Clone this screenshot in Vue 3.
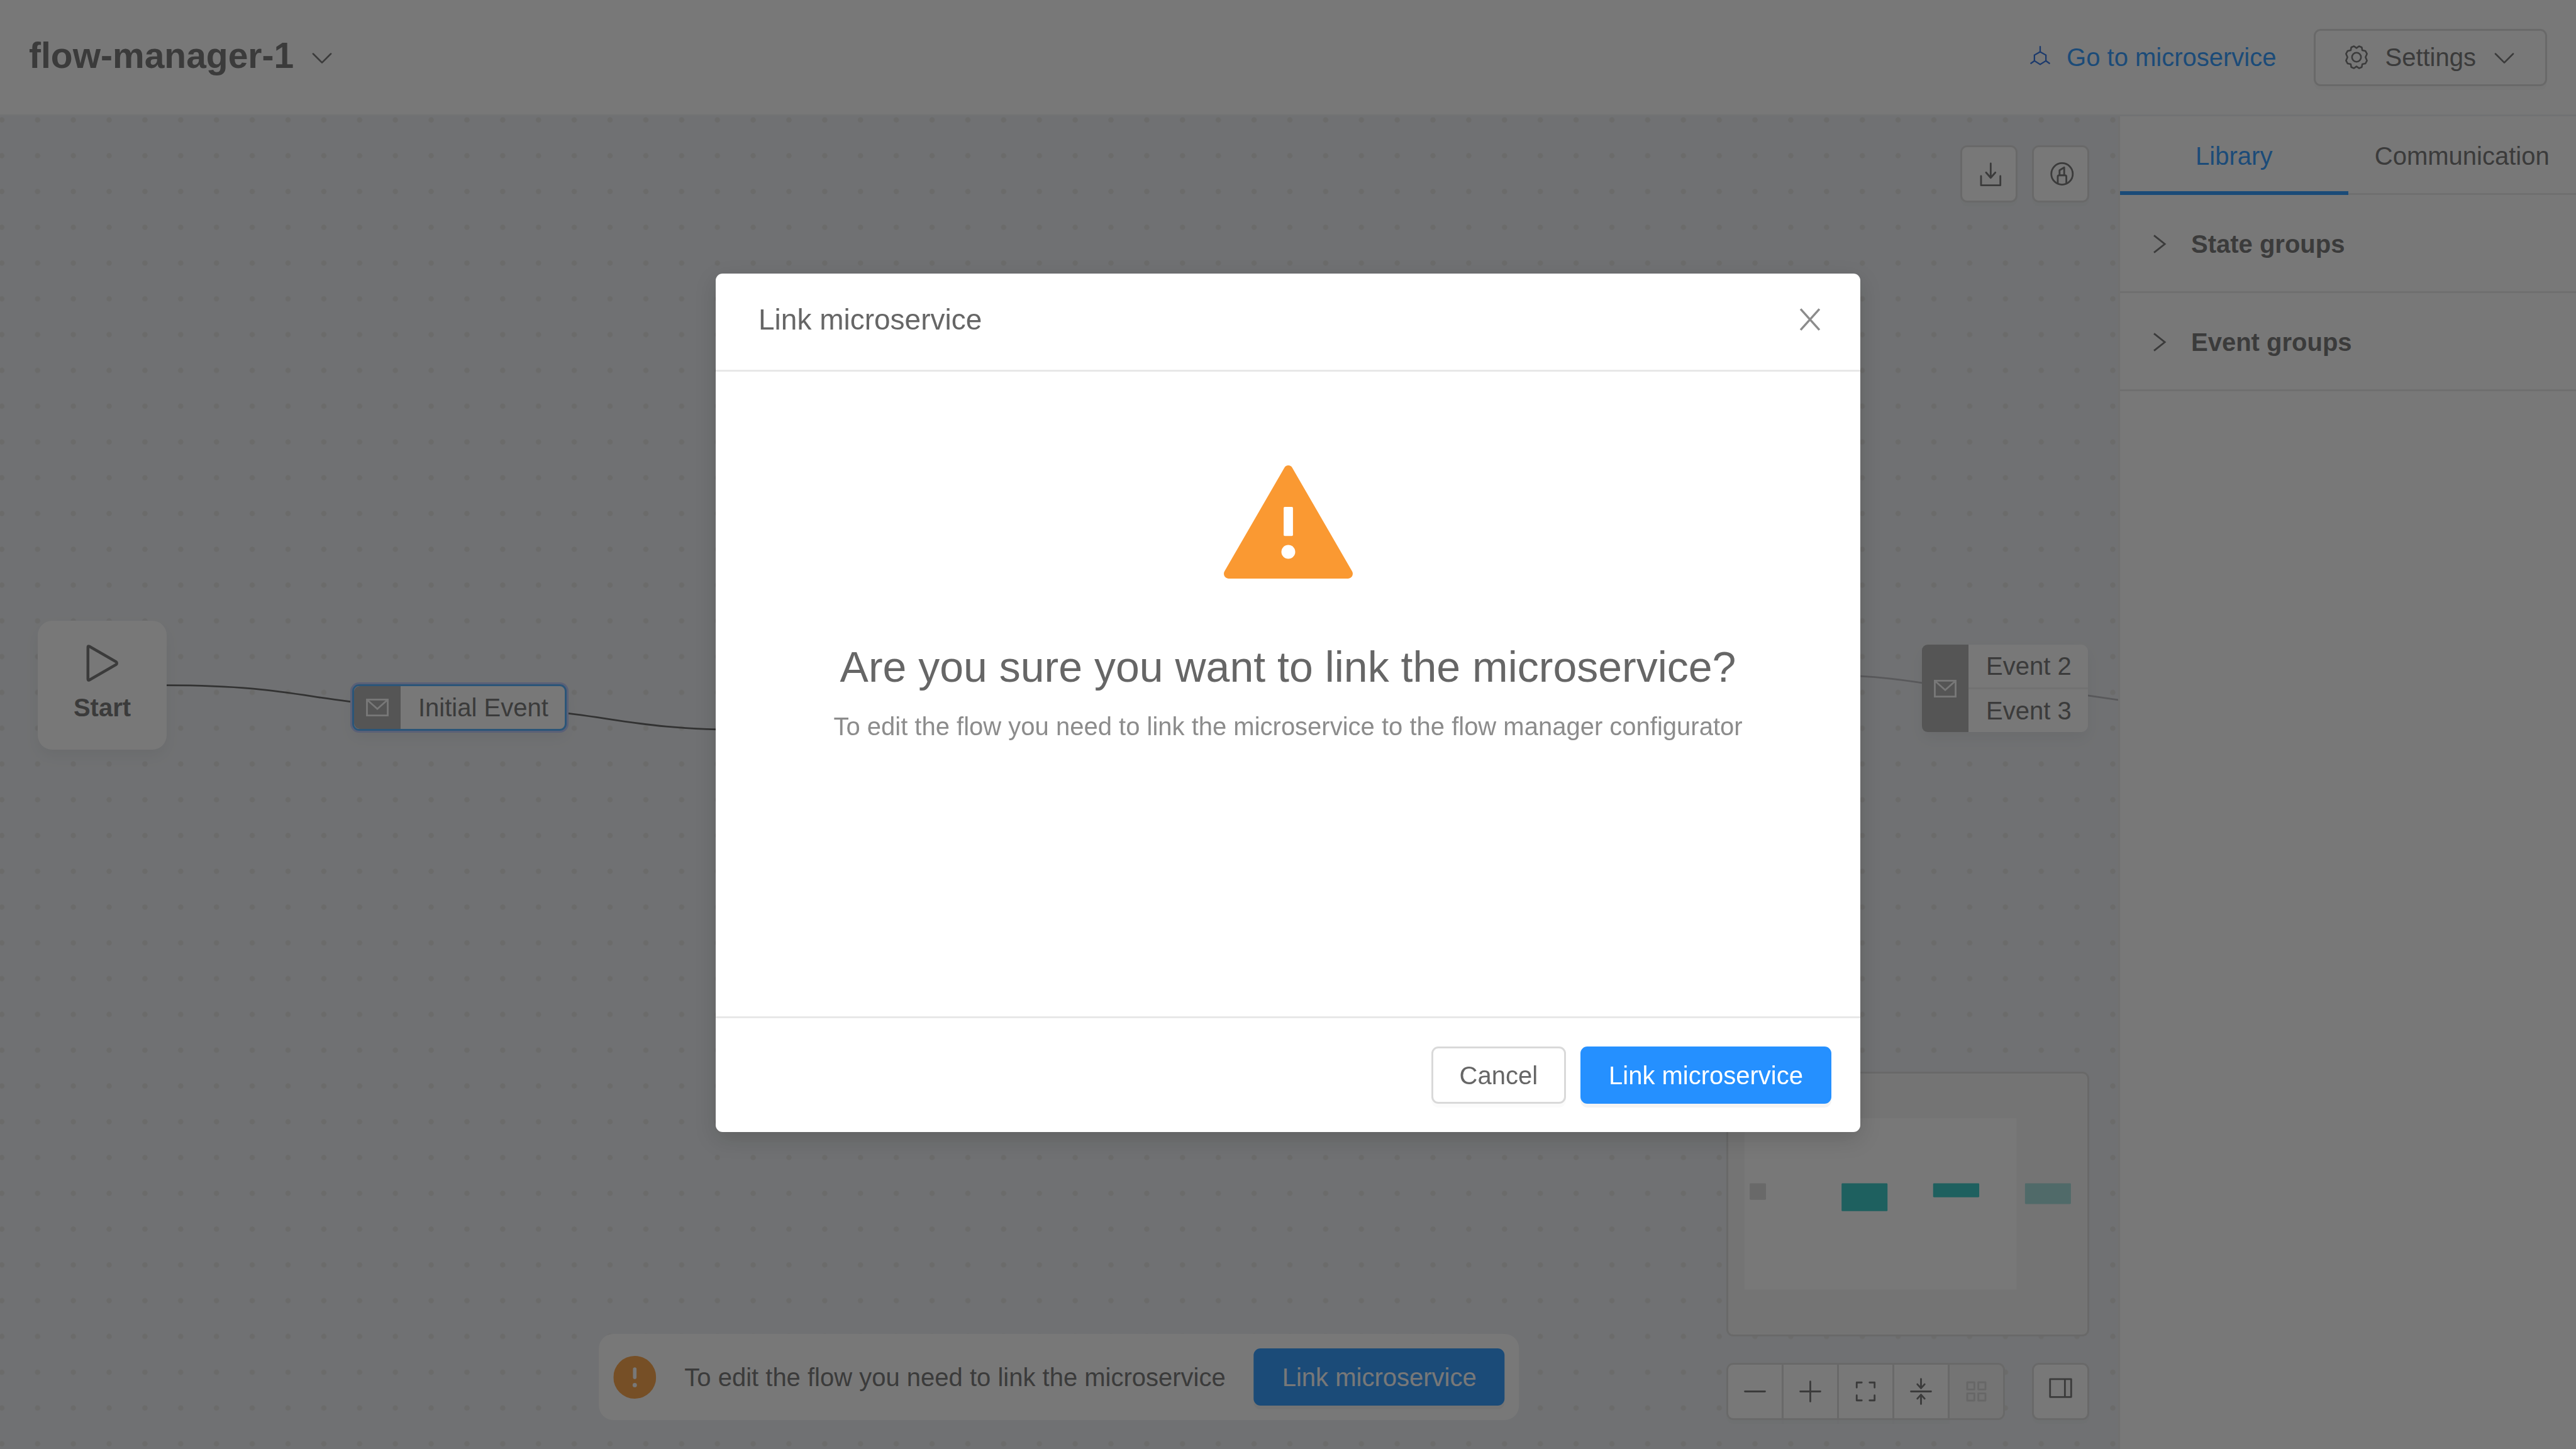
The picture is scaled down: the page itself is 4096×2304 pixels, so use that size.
<script setup>
import { ref } from 'vue'

const title = ref('flow-manager-1')
const activeTab = ref('library')
const tabs = [
  { id: 'library', label: 'Library' },
  { id: 'communication', label: 'Communication' },
]
const groups = ['State groups', 'Event groups']
const events = ['Event 2', 'Event 3']
const modalOpen = ref(true)

const miniNodes = [
  { x: 12, w: 9.1, h: 9.2, fill: '#d9d9d9' },
  { x: 63.4, w: 25.7, h: 15.6, fill: '#20c2c0' },
  { x: 114.6, w: 25.8, h: 7.8, fill: '#20c2c0' },
  { x: 166, w: 25.7, h: 11.6, fill: '#9bdcd9' },
]
</script>

<template>
  <div class="app">
    <header class="header">
      <div class="header-title">
        <h1>{{ title }}</h1>
        <button class="plain" aria-label="Switch flow manager">
          <svg class="icon-lg" viewBox="0 0 16 16"><path class="line" d="M3.1 6.1 8 11l4.9-4.9" /></svg>
        </button>
      </div>
      <div class="header-actions">
        <a class="service-link" href="#microservice">
          <svg class="icon" viewBox="0 0 70 70">
            <path class="service-glyph" d="M35 4v16M35 20l16 9v16l-16 10-16-10V29zM19 45 8 53M51 45l11 8" />
          </svg>
          Go to microservice
        </a>
        <button class="btn btn-settings">
          <svg class="icon-lg" viewBox="0 0 16 16">
            <path class="line" d="M6.6 1.9 8 2.9l1.4-1 1.5.6.3 1.7 1.7.3.9 1.6-.8 1.9.8 1.9-.9 1.6-1.7.3-.3 1.7-1.5.6-1.4-1-1.4 1-1.5-.6-.3-1.7-1.7-.3-.9-1.6.8-1.9-.8-1.9.9-1.6 1.7-.3.3-1.7z" />
            <circle class="line" cx="8" cy="8" r="2.5" />
          </svg>
          Settings
          <svg class="icon-lg" viewBox="0 0 16 16"><path class="line" d="M3.1 6.1 8 11l4.9-4.9" /></svg>
        </button>
      </div>
    </header>

    <div class="workspace">
      <main class="canvas">
        <svg class="canvas-bg" viewBox="0 0 1184 745" preserveAspectRatio="xMinYMin slice">
          <defs>
            <pattern id="grid-dots" x="-9" y="-8" width="20" height="20" patternUnits="userSpaceOnUse">
              <circle cx="10" cy="10" r="1.5" fill="#dededd" />
            </pattern>
          </defs>
          <rect width="1184" height="745" fill="url(#grid-dots)" />
          <path class="edge active" d="M93 318C175 318 175 330.5 257 330.5S339 343 421 343" />
          <path class="edge" d="M1040 312.9C1052 313.6 1064 315 1075 316.8M1167 323.7L1184 326.2" />
        </svg>

        <div class="node start-node">
          <svg class="play" viewBox="0 0 90 104">
            <path d="M5 7v90q0 4 4 2l75-43q4-4 0-8L9 5Q5 3 5 7z" />
          </svg>
          <strong>Start</strong>
        </div>

        <div class="node event-node selected">
          <span class="event-icon">
            <svg class="mail" viewBox="0 0 64 50"><path d="M2.5 2.5h59v45h-59zM4 4l28 25L60 4" /></svg>
          </span>
          <span class="event-label">Initial Event</span>
        </div>

        <div class="node event-node multi">
          <span class="event-icon">
            <svg class="mail" viewBox="0 0 64 50"><path d="M2.5 2.5h59v45h-59zM4 4l28 25L60 4" /></svg>
          </span>
          <ul class="event-list">
            <li v-for="e in events" :key="e" class="event-label">{{ e }}</li>
          </ul>
        </div>

        <div class="top-tools">
          <button class="btn btn-square" aria-label="Download">
            <svg viewBox="0 0 160 160">
              <path class="stroke5" d="M85 51v38M72 76l13 15 13-15M58 86v26h54V86" />
            </svg>
          </button>
          <button class="btn btn-square" aria-label="Highlight">
            <svg viewBox="0 0 160 160">
              <circle class="stroke5" cx="84" cy="80" r="30" />
              <path class="stroke5" d="M72 106V88q0-4 4-4h16q4 0 4 4v18M77 84V70l13-8v22" />
            </svg>
          </button>
        </div>

        <div class="banner">
          <svg class="banner-icon" viewBox="0 0 120 120">
            <circle cx="60" cy="60" r="60" fill="#fa9932" />
            <rect x="55" y="32" width="10" height="33" rx="5" fill="#fff" />
            <circle cx="60" cy="82" r="6" fill="#fff" />
          </svg>
          <span>To edit the flow you need to link the microservice</span>
          <button class="btn btn-primary">Link microservice</button>
        </div>

        <div class="bottom-tools">
          <div class="minimap">
            <svg viewBox="0 0 201 146">
              <rect x="9.2" y="25.1" width="152.1" height="95.7" fill="#fff" />
              <rect v-for="n in miniNodes" :key="n.x" :x="n.x" y="61.4" :width="n.w" :height="n.h" rx="0.5" :fill="n.fill" />
            </svg>
          </div>
          <div class="controls">
            <div class="btn-group">
              <button class="btn btn-square" aria-label="Zoom out">
                <svg viewBox="0 0 160 160"><path class="stroke5" d="M52 80h56" /></svg>
              </button>
              <button class="btn btn-square" aria-label="Zoom in">
                <svg viewBox="0 0 160 160"><path class="stroke5" d="M52 80h56M80 52v56" /></svg>
              </button>
              <button class="btn btn-square" aria-label="Fit view">
                <svg viewBox="0 0 160 160">
                  <path class="stroke5" d="M69 55H55v14M91 55h14v14M55 91v14h14M105 91v14H91" />
                </svg>
              </button>
              <button class="btn btn-square" aria-label="Collapse">
                <svg viewBox="0 0 160 160">
                  <path class="stroke5" d="M52 80h56M80 45v25M70 60l10 11 10-11M80 115V90M70 100l10-11 10 11" />
                </svg>
              </button>
              <button class="btn btn-square" disabled aria-label="Arrange">
                <svg viewBox="0 0 160 160">
                  <path class="stroke5" d="M54.5 54.5h20v20h-20zM85.5 54.5h20v20h-20zM54.5 85.5h20v20h-20zM85.5 85.5h20v20h-20z" />
                </svg>
              </button>
            </div>
            <button class="btn btn-square" aria-label="Toggle side panel">
              <svg viewBox="0 0 160 160"><path class="stroke5" d="M50.5 45.5h59v50h-59zM92 45.5v50" /></svg>
            </button>
          </div>
        </div>
      </main>

      <aside class="sidebar">
        <div class="tabs" role="tablist">
          <button
            v-for="t in tabs"
            :key="t.id"
            role="tab"
            class="tab"
            :class="{ active: t.id === activeTab }"
            :aria-selected="t.id === activeTab"
            @click="activeTab = t.id"
          >
            {{ t.label }}
          </button>
        </div>
        <button v-for="g in groups" :key="g" class="group">
          <svg class="group-arrow" viewBox="0 0 63 63"><path d="M14 7.5l30 24-30 24" /></svg>
          {{ g }}
        </button>
      </aside>
    </div>

    <div v-if="modalOpen" class="mask">
      <section class="modal" role="dialog" aria-modal="true" aria-labelledby="modal-title">
        <div class="modal-header">
          <h2 id="modal-title">Link microservice</h2>
          <button class="plain" aria-label="Close" @click="modalOpen = false">
            <svg class="icon-lg close" viewBox="0 0 80 80"><path d="M14 11l52 58M66 11L14 69" /></svg>
          </button>
        </div>
        <div class="modal-body">
          <svg class="warning" viewBox="0 0 360 316">
            <path fill="#fa9932" d="M169 6.5a12.7 12.7 0 0 1 22 0L358 295.5a13.5 13.5 0 0 1-11 20.5H13a13.5 13.5 0 0 1-11-20.5z" />
            <rect x="167" y="116" width="26" height="81" rx="3" fill="#fff" />
            <circle cx="180" cy="241.5" r="19.3" fill="#fff" />
          </svg>
          <h3>Are you sure you want to link the microservice?</h3>
          <p>To edit the flow you need to link the microservice to the flow manager configurator</p>
        </div>
        <div class="modal-footer">
          <button class="btn" @click="modalOpen = false">Cancel</button>
          <button class="btn btn-primary">Link microservice</button>
        </div>
      </section>
    </div>
  </div>
</template>

<style>
body {
  margin: 0;
}
</style>

<style scoped>
.app {
  display: flex;
  flex-direction: column;
  min-height: 100vh;
  background: #fff;
  color: #666;
  font-family: "Liberation Sans", Arial, sans-serif;
  font-size: 40px;
  line-height: 62px;
}

.app *,
.app {
  box-sizing: border-box;
}

h1,
h2,
h3,
p,
ul {
  margin: 0;
  padding: 0;
}

button {
  font: inherit;
  color: inherit;
  cursor: pointer;
}

svg {
  display: block;
  flex: none;
}

.plain {
  padding: 0;
  border: 0;
  background: none;
}

.icon {
  width: 40px;
  height: 40px;
}

.icon-lg {
  width: 46px;
  height: 46px;
}

.line {
  fill: none;
  stroke: currentColor;
  stroke-width: 0.9;
  stroke-linecap: round;
  stroke-linejoin: round;
}

.stroke5 {
  fill: none;
  stroke: currentColor;
  stroke-width: 5;
  stroke-linecap: round;
  stroke-linejoin: round;
}

/* Buttons */
.btn {
  display: inline-flex;
  align-items: center;
  justify-content: center;
  height: 91px;
  padding: 0 42px;
  border: 3px solid #d9d9d9;
  border-radius: 11px;
  background: #fff;
  box-shadow: 0 6px 0 rgba(0, 0, 0, 0.016);
  white-space: nowrap;
}

.btn-primary {
  border-color: #2590ff;
  background: #2590ff;
  box-shadow: 0 6px 0 rgba(0, 0, 0, 0.045);
  color: #fff;
}

.btn-square {
  width: 91px;
  padding: 0;
}

.btn-square svg {
  width: 91px;
  height: 91px;
}

.btn:disabled {
  background: #f5f5f5;
  box-shadow: none;
  color: #d4d4d4;
}

/* Header */
.header {
  display: flex;
  align-items: center;
  justify-content: space-between;
  height: 185px;
  padding: 0 46px;
  border-bottom: 3px solid #edf0f3;
}

.header-title {
  display: flex;
  align-items: center;
  gap: 22px;
}

.header-title h1 {
  padding-bottom: 6px;
  font-size: 57px;
  line-height: 80px;
}

.header-actions {
  display: flex;
  align-items: center;
  gap: 60px;
}

.service-link {
  display: flex;
  align-items: center;
  gap: 22px;
  color: #1890ff;
  text-decoration: none;
}

.service-glyph {
  fill: none;
  stroke: #1964e1;
  stroke-width: 4;
}

.btn-settings {
  gap: 22px;
}

/* Workspace */
.workspace {
  display: flex;
  flex: 1;
}

.canvas {
  position: relative;
  flex: 1;
  overflow: hidden;
  background: #ebeef2;
}

.canvas-bg {
  position: absolute;
  inset: 0;
  width: 100%;
  height: 100%;
}

.edge {
  fill: none;
  stroke: #b1b1b7;
  stroke-width: 1;
}

.edge.active {
  stroke: #525252;
}

.node {
  position: absolute;
  background: #fff;
  box-shadow: 0 11px 23px rgba(0, 0, 0, 0.06);
}

.start-node {
  left: 60px;
  top: 802px;
  display: flex;
  flex-direction: column;
  align-items: center;
  width: 205px;
  height: 205px;
  padding-top: 38px;
  border-radius: 23px;
}

.start-node strong {
  margin-top: 10px;
}

.play {
  width: 51px;
  height: 59px;
  fill: none;
  stroke: currentColor;
  stroke-width: 8;
}

.event-node {
  display: flex;
  border-radius: 11px;
}

.event-icon {
  display: flex;
  align-items: center;
  justify-content: center;
  width: 74px;
  border-radius: 9px 0 0 9px;
  background: #a8a8a8;
}

.mail {
  width: 36px;
  height: 28px;
  fill: none;
  stroke: #fff;
  stroke-width: 5;
}

.event-label {
  padding: 0 26px 0 28px;
  line-height: 68px;
}

.event-node.selected {
  left: 560px;
  top: 903px;
  height: 74px;
  border: 3px solid #40a9ff;
  box-shadow: 0 0 0 3px #b4c3fa, 0 11px 23px rgba(0, 0, 0, 0.06);
}

.event-node.multi {
  left: 3056px;
  top: 840px;
}

.event-list {
  list-style: none;
}

.event-list li + li {
  border-top: 3px solid #f0f0f0;
}

.top-tools {
  position: absolute;
  top: 46px;
  right: 46px;
  display: flex;
  gap: 23px;
}

.banner {
  position: absolute;
  bottom: 46px;
  left: 50%;
  display: flex;
  align-items: center;
  gap: 45px;
  padding: 23px;
  border-radius: 23px;
  background: #fff;
  transform: translateX(-50%);
  white-space: nowrap;
}

.banner .btn-primary {
  border-color: #1890ff;
  background: #1890ff;
}

.banner-icon {
  width: 68px;
  height: 68px;
}

.bottom-tools {
  position: absolute;
  right: 46px;
  bottom: 46px;
  display: flex;
  flex-direction: column;
  gap: 42px;
}

.minimap {
  border: 3px solid #d9d9d9;
  border-radius: 11px;
  background: #f5f5f5;
}

.minimap svg {
  width: 100%;
  height: 415px;
}

.controls {
  display: flex;
  gap: 43px;
}

.btn-group {
  display: flex;
}

.btn-group .btn {
  border-radius: 0;
}

.btn-group .btn + .btn {
  margin-left: -3px;
}

.btn-group .btn:first-child {
  border-radius: 11px 0 0 11px;
}

.btn-group .btn:last-child {
  border-radius: 0 11px 11px 0;
}

/* Sidebar */
.sidebar {
  width: 728px;
  border-left: 3px solid #ebebeb;
}

.tabs {
  display: flex;
  height: 125px;
  border-bottom: 3px solid #e8e8e8;
}

.tab {
  flex: 1;
  height: 125px;
  padding: 6px 0 0;
  border: 0;
  border-bottom: 6px solid transparent;
  background: none;
}

.tab.active {
  border-color: #1890ff;
  color: #1890ff;
}

.group {
  display: flex;
  align-items: center;
  gap: 31px;
  width: 100%;
  height: 156px;
  padding: 2px 46px 0;
  border: 0;
  border-bottom: 3px solid #e8e8e8;
  background: none;
  font-weight: bold;
}

.group-arrow {
  width: 36px;
  height: 36px;
  fill: none;
  stroke: currentColor;
  stroke-width: 5;
}

/* Modal */
.mask {
  position: fixed;
  inset: 0;
  padding-top: 435px;
  background: rgba(30, 30, 30, 0.6);
}

.modal {
  width: 1820px;
  margin: 0 auto;
  border-radius: 11px;
  background: #fff;
  box-shadow: 0 11px 34px rgba(0, 0, 0, 0.15);
}

.modal-header {
  display: flex;
  align-items: center;
  justify-content: space-between;
  height: 156px;
  padding: 0 57px 7px 68px;
  border-bottom: 3px solid #e8e8e8;
}

.modal-header h2 {
  font-size: 46px;
  font-weight: normal;
}

.close {
  fill: none;
  stroke: #8c8c8c;
  stroke-width: 6;
}

.modal-body {
  display: flex;
  flex-direction: column;
  align-items: center;
  height: 1025px;
  padding-top: 149px;
}

.warning {
  width: 205px;
  height: 180px;
}

.modal-body h3 {
  margin-top: 92px;
  font-size: 68px;
  font-weight: normal;
  line-height: 96px;
}

.modal-body p {
  margin-top: 16px;
  color: #8c8c8c;
}

.modal-footer {
  display: flex;
  justify-content: flex-end;
  gap: 23px;
  padding: 45px 46px;
  border-top: 3px solid #e8e8e8;
}
</style>
